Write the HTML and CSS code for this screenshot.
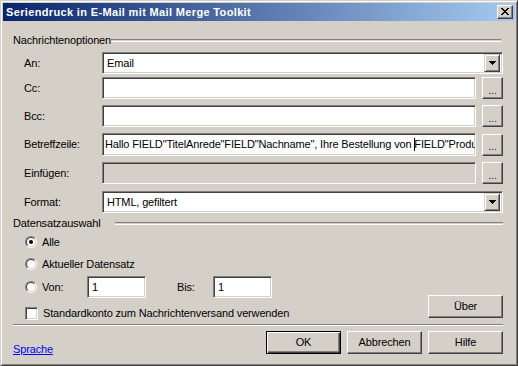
FILE: index.html
```html
<!DOCTYPE html>
<html lang="de">
<head>
<meta charset="utf-8">
<title>Seriendruck in E-Mail mit Mail Merge Toolkit</title>
<link rel="stylesheet" href="styles.css">
</head>
<body>
<div class="window">
  <div class="titlebar">
    <span class="title">Seriendruck in E-Mail mit Mail Merge Toolkit</span>
    <span class="caption-btn">
      <svg width="8" height="7" viewBox="0 0 8 7" shape-rendering="crispEdges"><path fill="#000" d="M0 0h2v1H0zM6 0h2v1H6zM1 1h2v1H1zM5 1h2v1H5zM2 2h4v1H2zM3 3h2v1H3zM2 4h4v1H2zM1 5h2v1H1zM5 5h2v1H5zM0 6h2v1H0zM6 6h2v1H6z"/></svg>
    </span>
  </div>
  <div class="client">
    <div class="group-head"><span class="group-title">Nachrichtenoptionen</span><span class="rule"></span></div>

    <div class="field-row row-an">
      <span class="label">An:</span>
      <div class="combo"><span class="combo-text">Email</span><span class="drop-btn"><svg width="7" height="4" viewBox="0 0 7 4" shape-rendering="crispEdges"><path d="M0 0h7v1H0zM1 1h5v1H1zM2 2h3v1H2zM3 3h1v1H3z"/></svg></span></div>
    </div>
    <div class="field-row row-cc">
      <span class="label">Cc:</span>
      <div class="edit"></div>
      <span class="btn btn-dots">...</span>
    </div>
    <div class="field-row row-bcc">
      <span class="label">Bcc:</span>
      <div class="edit"></div>
      <span class="btn btn-dots">...</span>
    </div>
    <div class="field-row row-subject">
      <span class="label">Betreffzeile:</span>
      <div class="edit edit-subject">Hallo FIELD"TitelAnrede"FIELD"Nachname", Ihre Bestellung von <span class="caret"></span>FIELD"Produkt"</div>
      <span class="btn btn-dots">...</span>
    </div>
    <div class="field-row row-insert">
      <span class="label">Einfügen:</span>
      <div class="edit edit-disabled"></div>
      <span class="btn btn-dots">...</span>
    </div>
    <div class="field-row row-format">
      <span class="label">Format:</span>
      <div class="combo"><span class="combo-text">HTML, gefiltert</span><span class="drop-btn"><svg width="7" height="4" viewBox="0 0 7 4" shape-rendering="crispEdges"><path d="M0 0h7v1H0zM1 1h5v1H1zM2 2h3v1H2zM3 3h1v1H3z"/></svg></span></div>
    </div>

    <div class="group-head group-head-data"><span class="group-title">Datensatzauswahl</span><span class="rule"></span></div>

    <div class="records">
      <div class="records-left">
        <div class="radio-row row-alle"><span class="radio"><span class="radio-inner"><span class="dot"></span></span></span><span>Alle</span></div>
        <div class="radio-row"><span class="radio"><span class="radio-inner"></span></span><span>Aktueller Datensatz</span></div>
        <div class="radio-row row-von">
          <span class="radio"><span class="radio-inner"></span></span><span class="von-label">Von:</span>
          <div class="edit edit-small">1</div>
          <span class="bis-label">Bis:</span>
          <div class="edit edit-small">1</div>
        </div>
        <div class="check-row"><span class="checkbox"></span><span>Standardkonto zum Nachrichtenversand verwenden</span></div>
      </div>
      <span class="btn btn-about">Über</span>
    </div>

    <div class="separator"></div>

    <div class="footer">
      <a class="link" href="#">Sprache</a>
      <div class="buttons">
        <span class="btn btn-default">OK</span>
        <span class="btn">Abbrechen</span>
        <span class="btn">Hilfe</span>
      </div>
    </div>
  </div>
</div>
</body>
</html>
```

FILE: styles.css
```css
html, body {
  margin: 0;
  padding: 0;
  background: #D4D0C8;
}

.window {
  width: 518px;
  height: 366px;
  box-sizing: border-box;
  border: 1px solid;
  border-color: #D4D0C8 #404040 #404040 #D4D0C8;
  box-shadow: inset 1px 1px #fff, inset -1px -1px #808080;
  padding: 2px;
  background: #D4D0C8;
  display: flex;
  flex-direction: column;
  font: 11px/13px "Liberation Sans", Arial, sans-serif;
  letter-spacing: -0.15px;
  color: #000;
}

.titlebar {
  height: 18px;
  flex: none;
  display: flex;
  align-items: center;
  padding: 0 2px 0 3px;
  background: linear-gradient(to right, #0A246A, #A6CAF0);
}

.title {
  flex: 1;
  color: #fff;
  font-weight: bold;
  letter-spacing: 0.35px;
  line-height: 18px;
  white-space: nowrap;
}

.caption-btn {
  width: 16px;
  height: 14px;
  box-sizing: border-box;
  border: 1px solid;
  border-color: #fff #404040 #404040 #fff;
  box-shadow: inset -1px -1px #808080;
  background: #D4D0C8;
  display: flex;
  align-items: center;
  justify-content: center;
  padding: 0 1px 1px 0;
}

.caption-btn svg { display: block; }

.client {
  flex: 1;
  display: flex;
  flex-direction: column;
  padding: 0 12px 0 10px;
}

.group-head {
  display: flex;
  align-items: center;
  margin-top: 13px;
  height: 13px;
}

.group-title { white-space: nowrap; }

.rule {
  flex: 1;
  height: 1px;
  border-top: 1px solid #808080;
  border-bottom: 1px solid #fff;
  margin-right: 2px;
}

.group-head-data { margin-top: 4px; }
.group-head-data .rule { margin-left: 14px; margin-right: 0; }

.field-row {
  display: grid;
  grid-template-columns: 83px 374px 21px;
  column-gap: 6px;
  height: 22px;
  align-items: center;
}

.row-an { margin-top: 5px; }
.row-cc { margin-top: 3px; }
.row-bcc { margin-top: 6px; }
.row-subject { margin-top: 6px; height: 23px; }
.row-insert { margin-top: 6px; }
.row-format { margin-top: 7px; }

.label {
  padding-left: 11px;
  white-space: nowrap;
}

.edit {
  height: 22px;
  box-sizing: border-box;
  border: 1px solid;
  border-color: #808080 #fff #fff #808080;
  box-shadow: inset 1px 1px #404040, inset -1px -1px #D4D0C8;
  background: #fff;
  padding: 0 2px 0 3px;
  line-height: 20px;
  white-space: nowrap;
  overflow: hidden;
}

.edit-subject {
  height: 23px;
  line-height: 21px;
  padding-left: 2px;
}

.edit-disabled { background: #D4D0C8; }

.caret {
  display: inline-block;
  width: 0;
  height: 13px;
  border-left: 1px solid #000;
  vertical-align: -3px;
  margin-right: -1px;
}

.combo {
  grid-column: 2 / 4;
  height: 22px;
  box-sizing: border-box;
  border: 1px solid;
  border-color: #808080 #fff #fff #808080;
  box-shadow: inset 1px 1px #404040, inset -1px -1px #D4D0C8;
  background: #fff;
  display: flex;
  align-items: center;
  padding: 2px 2px 2px 4px;
}

.combo-text { flex: 1; }

.drop-btn {
  width: 16px;
  height: 18px;
  box-sizing: border-box;
  border: 1px solid;
  border-color: #D4D0C8 #404040 #404040 #D4D0C8;
  box-shadow: inset 1px 1px #fff, inset -1px -1px #808080;
  background: #D4D0C8;
  display: flex;
  align-items: center;
  justify-content: center;
}

.drop-btn svg { display: block; }

.btn {
  height: 23px;
  box-sizing: border-box;
  border: 1px solid;
  border-color: #fff #404040 #404040 #fff;
  box-shadow: inset -1px -1px #808080;
  background: #D4D0C8;
  display: flex;
  align-items: center;
  justify-content: center;
  width: 75px;
  white-space: nowrap;
}

.btn-dots {
  width: 21px;
  height: 22px;
  color: #1a1a60;
  line-height: 10px;
  padding-top: 3px;
}

.btn-default {
  border-color: #000;
  box-shadow: inset 1px 1px #fff, inset -1px -1px #404040, inset -2px -2px #808080;
}

.records {
  display: flex;
  align-items: flex-end;
  justify-content: space-between;
}

.records-left {
  display: flex;
  flex-direction: column;
  padding-left: 12px;
}

.radio-row {
  display: flex;
  align-items: center;
  height: 22px;
  gap: 5px;
}

.row-alle { margin-top: 1px; }
.row-von { margin-top: 1px; }

.radio {
  width: 12px;
  height: 12px;
  box-sizing: border-box;
  border-radius: 50%;
  border: 1px solid;
  border-color: #808080 #fff #fff #808080;
  flex: none;
}

.radio-inner {
  display: flex;
  align-items: center;
  justify-content: center;
  width: 10px;
  height: 10px;
  box-sizing: border-box;
  border-radius: 50%;
  border: 1px solid;
  border-color: #404040 #D4D0C8 #D4D0C8 #404040;
  background: #fff;
}

.dot {
  width: 4px;
  height: 4px;
  border-radius: 50%;
  background: #000;
}

.von-label { width: 40px; }

.edit-small {
  width: 59px;
  padding-left: 4px;
}

.bis-label {
  margin-left: 26px;
  width: 31px;
}

.check-row {
  display: flex;
  align-items: center;
  height: 13px;
  gap: 5px;
  margin-top: 9px;
}

.checkbox {
  width: 13px;
  height: 13px;
  box-sizing: border-box;
  border: 1px solid;
  border-color: #808080 #fff #fff #808080;
  box-shadow: inset 1px 1px #404040, inset -1px -1px #D4D0C8;
  background: #fff;
  flex: none;
}

.btn-about { margin-bottom: 2px; }

.separator {
  margin-top: 4px;
  height: 0;
  border-top: 1px solid #808080;
  border-bottom: 1px solid #fff;
}

.footer {
  display: flex;
  align-items: flex-end;
  justify-content: space-between;
  margin-top: 5px;
}

.link {
  color: #0000FF;
  text-decoration: underline;
  margin-bottom: -2px;
}

.buttons {
  display: flex;
  gap: 6px;
}
```
